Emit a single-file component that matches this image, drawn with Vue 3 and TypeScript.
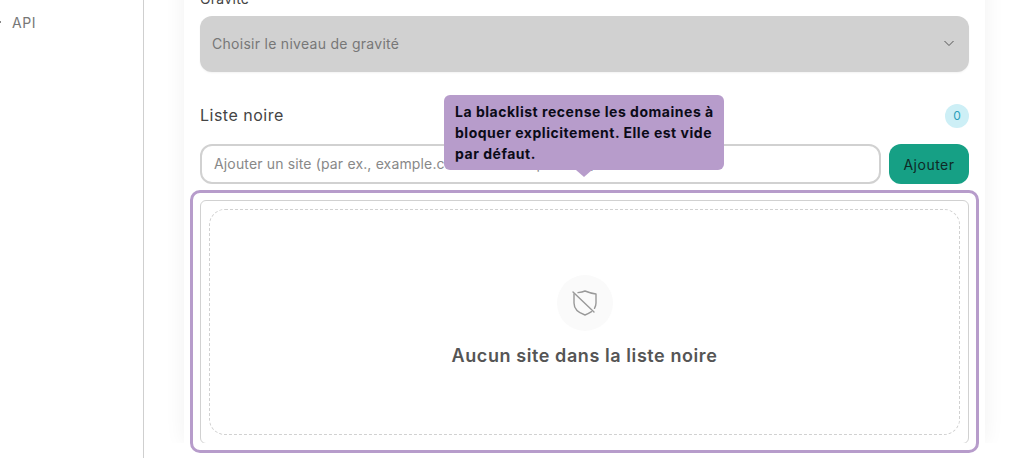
<script setup lang="ts">
const title: string = 'Liste noire'
</script>

<template>
  <div class="page">
    <aside class="sidebar">
      <div class="nav-item">
        <svg class="nav-chevron" width="8" height="8" viewBox="0 0 8 8"><path d="M2 1l3 3-3 3" fill="none" stroke="#888" stroke-width="1" /></svg>
        <span>API</span>
      </div>
    </aside>
    <main class="main">
      <section class="card">
        <label class="field-label">Gravité</label>
        <div class="select">
          <span>Choisir le niveau de gravité</span>
          <svg width="12" height="12" viewBox="0 0 12 12"><path d="M1.500 4l4.500 4.500L10.500 4" fill="none" stroke="#555" stroke-width="1" /></svg>
        </div>
        <div class="list-head">
          <h3>{{ title }}</h3>
          <span class="badge">0</span>
        </div>
        <div class="add-row">
          <div class="input">Ajouter un site (par ex., example.com ou *.example.com)</div>
          <button class="add-btn" type="button">Ajouter</button>
        </div>
        <div class="list-box">
          <div class="empty">
            <div class="empty-icon">
              <svg width="30" height="30" viewBox="0 0 30 30" fill="none" stroke="#999" stroke-width="1.4" stroke-linecap="round" stroke-linejoin="round">
                <path d="M8 4.600C10.500 4.300 13 3.800 15 3c3 1.200 6.500 2.600 11 3v9c0 2-.6 3.700-1.500 5.300" />
                <path d="M21.500 23.700C19.500 25 17.500 26.200 15 27 9 25 4 21 4 15V6" />
                <path d="M3 4l21 20" />
              </svg>
            </div>
            <p>Aucun site dans la liste noire</p>
          </div>
        </div>
      </section>
    </main>
    <div class="highlight"></div>
    <div class="tooltip">La blacklist recense les domaines à bloquer explicitement. Elle est vide par défaut.</div>
  </div>
</template>

<style>
html, body { margin: 0; background: #fff; }
</style>

<style scoped>
.page {
  position: relative;
  display: flex;
  width: 1025px;
  height: 458px;
  overflow: hidden;
  font-family: Inter, "Liberation Sans", sans-serif;
  background: #fff;
}
.sidebar {
  flex: 0 0 143px;
  height: 458px;
  border-right: 1px solid #cfcfcf;
}
.nav-item {
  display: flex;
  align-items: center;
  gap: 8px;
  margin: 13px 0 0 -4px;
  height: 18px;
  font-size: 14px;
  letter-spacing: 0.6px;
  color: #777;
}
.nav-chevron { flex: none; }
.main {
  flex: 1;
  height: 443px;
  overflow: hidden;
  padding: 0 40px;
}
.card {
  height: 470px;
  margin-top: -27px;
  padding: 16px;
  box-sizing: border-box;
  background: #fff;
  box-shadow: 0 0 20px rgba(0, 0, 0, 0.06);
}
.field-label {
  display: block;
  height: 27px;
  line-height: 20px;
  font-size: 14px;
  letter-spacing: 0.3px;
  color: #444;
}
.select {
  display: flex;
  align-items: center;
  justify-content: space-between;
  height: 56px;
  padding: 0 14px 2px 12px;
  box-sizing: border-box;
  border-radius: 12px;
  background: #d1d1d1;
  font-size: 14px;
  letter-spacing: 0.28px;
  color: #777;
  box-shadow: 0 1px 2px rgba(0, 0, 0, 0.05);
}
.list-head {
  display: flex;
  align-items: center;
  justify-content: space-between;
  height: 24px;
  margin-top: 32px;
}
.list-head h3 {
  margin: 0 0 2px;
  font-size: 16px;
  font-weight: 400;
  letter-spacing: 0.5px;
  color: #444;
}
.badge {
  width: 24px;
  height: 24px;
  border-radius: 50%;
  background: #cdeff6;
  color: #2b9fbb;
  font-size: 12px;
  line-height: 24px;
  text-align: center;
}
.add-row {
  display: flex;
  gap: 8px;
  margin-top: 16px;
}
.input {
  flex: 1;
  height: 40px;
  padding: 0 12px;
  box-sizing: border-box;
  border: 2px solid #d1d1d1;
  border-radius: 12px;
  font-size: 14px;
  letter-spacing: 0.15px;
  line-height: 36px;
  color: #888;
  white-space: nowrap;
  overflow: hidden;
}
.add-btn {
  width: 80px;
  height: 40px;
  padding: 0;
  border: 0;
  border-radius: 12px;
  background: #16a085;
  color: #0f2a25;
  font: inherit;
  font-size: 14px;
  letter-spacing: 0.5px;
}
.list-box {
  height: 244px;
  margin-top: 16px;
  padding: 8px;
  box-sizing: border-box;
  border: 1px solid #d1d1d1;
  border-radius: 6px;
}
.empty {
  display: flex;
  flex-direction: column;
  align-items: center;
  height: 226px;
  padding-top: 65px;
  box-sizing: border-box;
  border: 1px dashed #d1d1d1;
  border-radius: 16px;
}
.empty-icon {
  display: flex;
  align-items: center;
  justify-content: center;
  width: 56px;
  height: 56px;
  border-radius: 50%;
  background: #fafafa;
}
.empty p {
  margin: 13px 0 0;
  font-size: 18px;
  line-height: 24px;
  font-weight: 600;
  letter-spacing: 0.58px;
  color: #555;
}
.highlight {
  position: absolute;
  left: 190px;
  top: 190px;
  width: 789px;
  height: 263px;
  box-sizing: border-box;
  border: 3px solid #b79ccb;
  border-radius: 10px;
  pointer-events: none;
}
.tooltip {
  position: absolute;
  left: 444px;
  top: 95px;
  width: 280px;
  height: 75px;
  padding: 6px 8px 6px 11px;
  box-sizing: border-box;
  border-radius: 6px;
  background: #b79ccb;
  color: #0b0b18;
  font-size: 14px;
  font-weight: 700;
  line-height: 21px;
  letter-spacing: 0.52px;
}
.tooltip::after {
  content: "";
  position: absolute;
  left: 132px;
  bottom: -7px;
  border-left: 8px solid transparent;
  border-right: 8px solid transparent;
  border-top: 7px solid #b79ccb;
}
</style>
